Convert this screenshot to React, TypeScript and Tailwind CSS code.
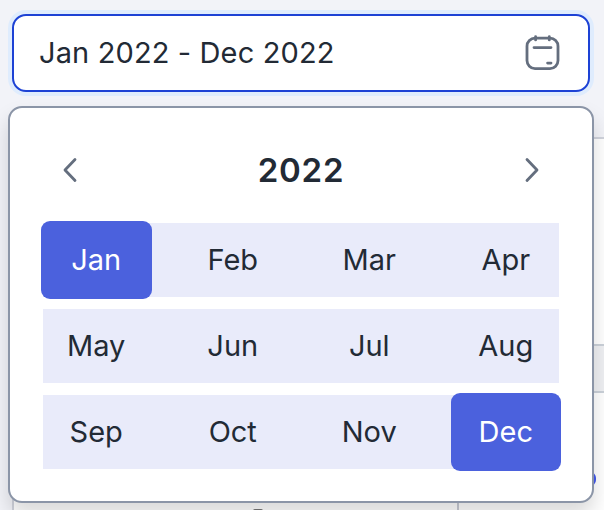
const quarters = [
  ["Jan", "Feb", "Mar", "Apr"],
  ["May", "Jun", "Jul", "Aug"],
  ["Sep", "Oct", "Nov", "Dec"],
];

const selected = ["Jan", "Dec"];

function CalendarIcon() {
  return (
    <svg width="36" height="38" viewBox="0 0 36 38" fill="none" stroke="#646e7e" strokeWidth="2.8" strokeLinecap="round">
      <rect x="2" y="4.2" width="31" height="30.4" rx="8" />
      <path d="M10.6 2.7v3.2M24.3 2.7v3.2" />
      <path d="M9 13.6h17M22.6 29.1h3.4" />
    </svg>
  );
}

function Chevron({ d }: { d: string }) {
  return (
    <svg width="16" height="28" viewBox="0 0 16 28" fill="none" stroke="#646e7e" strokeWidth="2.8" strokeLinecap="round" strokeLinejoin="round">
      <path d={d} />
    </svg>
  );
}

function Month({ name }: { name: string }) {
  const base = "flex h-[73.5px] w-[106.5px] items-center justify-center";

  if (selected.includes(name)) {
    return (
      <div className={`${base} rounded-[7px] bg-[#4b61dd] text-white ring-2 ring-[#4b61dd]`}>
        {name}
      </div>
    );
  }

  return <div className={base}>{name}</div>;
}

export default function App() {
  return (
    <main className="relative h-[510px] w-[604px] overflow-hidden bg-[#f2f3f8] font-['Inter',sans-serif] text-[29px] font-[375] text-[#222a35]">
      <div className="px-3 pt-3.5">
        <div className="flex h-[78px] w-[578px] items-center justify-between rounded-[14px] border-2 border-[#1d42d5] bg-white pr-[27px] pl-[25px] ring-4 ring-[#dfecfd]">
          <span className="tracking-[0.13px]">Jan 2022 - Dec 2022</span>
          <CalendarIcon />
        </div>
      </div>

      {/* table behind the open picker */}
      <div className="mt-[45px] ml-3 border-t-2 border-l-2 border-[#d0d3dc] bg-white">
        <div className="h-[205px]" />
        <div className="h-[49px] border-y-2 border-[#cbd1d9] bg-[#eff0f3]" />
        <div className="flex h-[117px] w-[445px] items-end justify-center border-r-2 border-[#c9ccd5]">
          <div className="h-0.5 w-2.5 translate-x-[22px] translate-y-px rounded-t-full bg-[#777777]" />
        </div>
      </div>
      <div className="absolute top-[472px] left-[584px] h-3.5 w-[11.5px] rounded-full bg-[#4359ee]" />

      <section className="absolute top-[106px] left-2 h-[397px] w-[586px] rounded-[14px] border-2 border-[#8b95a7] bg-white px-[33px] shadow-[0_12px_20px_rgba(0,0,0,0.15)]">
        <header className="flex h-[115px] items-center justify-between px-[19px] pt-[9px]">
          <Chevron d="M13 3.5 3 14l10 10.5" />
          <h1 className="translate-y-px text-[33px] font-semibold tracking-[0.8px]">2022</h1>
          <Chevron d="M3 3.5 13 14 3 24.5" />
        </header>
        <div className="flex flex-col gap-[12.5px]">
          {quarters.map((months) => (
            <div key={months[0]} className="flex justify-between bg-[#e9ebfa]">
              {months.map((month) => (
                <Month key={month} name={month} />
              ))}
            </div>
          ))}
        </div>
      </section>
    </main>
  );
}
